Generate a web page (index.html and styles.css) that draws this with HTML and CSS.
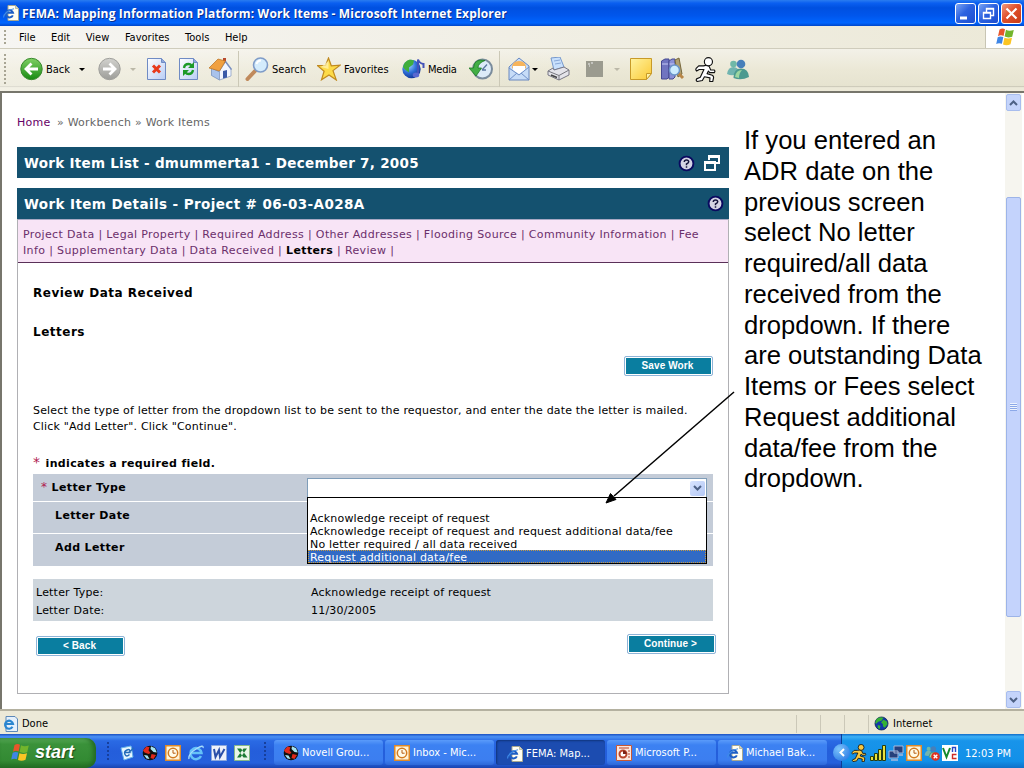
FILE: index.html
```html
<!DOCTYPE html>
<html lang="en">
<head>
    <meta charset="UTF-8">
    <meta name="viewport" content="width=device-width, initial-scale=1.0">
    <title>FEMA: Mapping Information Platform: Work Items</title>
    <link rel="stylesheet" href="styles.css">
</head>
<body>
    <!-- shared icons -->
    <svg class="defs" width="0" height="0">
        <defs>
            <linearGradient id="g-green" x1="0" y1="0" x2="0" y2="1"><stop offset="0" stop-color="#7fd064"/><stop offset="1" stop-color="#188a12"/></linearGradient>
            <linearGradient id="g-gray" x1="0" y1="0" x2="0" y2="1"><stop offset="0" stop-color="#d2d2ce"/><stop offset="1" stop-color="#9d9d99"/></linearGradient>
            <linearGradient id="g-page" x1="0" y1="0" x2="1" y2="1"><stop offset="0" stop-color="#fff"/><stop offset="1" stop-color="#b9cdf5"/></linearGradient>
            <linearGradient id="g-note" x1="0" y1="0" x2="1" y2="1"><stop offset="0" stop-color="#fff3a0"/><stop offset="1" stop-color="#fbc935"/></linearGradient>
            <radialGradient id="g-globe" cx=".35" cy=".3" r=".8"><stop offset="0" stop-color="#9fd4ff"/><stop offset=".5" stop-color="#2f6fd8"/><stop offset="1" stop-color="#0a2a8a"/></radialGradient>
        </defs>
        <symbol id="ie-doc" viewBox="0 0 16 16">
            <path d="M5 .5h7.500L15.500 3.500v12H5z" fill="#fffef2" stroke="#a8a890"/>
            <path d="M12.500 .5v3h3" fill="#d8d8c4" stroke="#a8a890" stroke-width=".7"/>
            <path d="M9.800 10.300A3.600 3.600 0 1 1 10 7.800H3.500" fill="none" stroke="#1e5fc4" stroke-width="2"/>
            <path d="M.8 12.500C0 10 5 4.500 11 3.800" fill="none" stroke="#3f8be8" stroke-width="1.100"/>
        </symbol>
        <symbol id="flag" viewBox="0 0 20 18">
            <path d="M4.500 1.500Q7.500-.3 10 1.200L8.600 8Q5.800 6.600 3 8.200z" fill="#e8562a"/>
            <path d="M11 1.800Q14 3.500 18.800 2L17.200 8.700Q13 10.200 9.600 8.600z" fill="#72b52c"/>
            <path d="M2.700 9.300Q5.500 7.700 8.300 9.100L6.900 15.800Q4 14.500 1.200 16z" fill="#3e86e6"/>
            <path d="M9.400 9.700Q13 11.300 17 9.800L15.500 16.300Q11.500 18 8 16.400z" fill="#fbc524"/>
        </symbol>
        <symbol id="clock" viewBox="0 0 16 16">
            <rect width="16" height="16" fill="#e08a28"/><rect x="1.500" y="1.500" width="13" height="13" fill="#fff4d8"/>
            <circle cx="8" cy="8" r="4.700" fill="#fffbe8" stroke="#d27a20" stroke-width="1.500"/>
            <path d="M8 5v3.200h2.600" fill="none" stroke="#b45a10"/>
        </symbol>
        <symbol id="novell" viewBox="0 0 16 16">
            <circle cx="8" cy="8" r="7.300" fill="#111"/>
            <path d="M1 5.500L4.500 1.500l3 .8-1 3 2 2.700-2 1-4-1.500zM9.500 9l4.500 1-2.500 4-3-1z" fill="#e0281c"/>
            <path d="M9 1.200l4 2 1.800 4.300-3.300-.5-3-3zM2 10l3.500 .5 2 3.500-3-.5z" fill="#a4e4f4"/>
        </symbol>
        <symbol id="globe" viewBox="0 0 16 16">
            <circle cx="8" cy="8" r="7" fill="#1238a8" stroke="#061a48" stroke-width=".7"/>
            <path d="M3 3Q7 0 10 2L8 5 4.500 6 2 8.500 1.300 7zM10 4l3.500 1.500 1 3-3 4-2-1.500V8.500L7.500 7zM4 9.500l3 1-1 3.500-2-1.500z" fill="#35b135"/>
        </symbol>
        <symbol id="people" viewBox="0 0 24 22">
            <circle cx="7.500" cy="6" r="3.300" fill="#6fb8a8"/><path d="M1 16q1-7 6.500-7 5 0 5.500 6-6 4-12 1z" fill="#70b4b0"/>
            <circle cx="15" cy="6" r="4.300" fill="#477fba"/><path d="M7.500 20q0-9.500 7.500-9.500T23 19q-8 4-15.500 1z" fill="#4c9a90"/>
            <path d="M9 19q1-7 7-7-3 3-3 8z" fill="#9cd6a0"/>
        </symbol>
        <symbol id="runner" viewBox="0 0 20 24">
            <path d="M8 8.500Q11 7.500 13.500 9L15 12.500h3.500q1 1.300 0 2.500H14l-1.200-1.500L11.500 16l5 1.500q1.500 .8 1.200 2.500l-.7 3.500h-3l.3-3.500-5.300-1L7 22.500 2 23.500Q.5 22.500 1.500 21l3.500-1.500 3.500-7.500H4L1.500 13.500Q.2 12.500 1 11l2.500-2.500z" fill="currentColor" stroke="#111" stroke-width="1.100" stroke-linejoin="round"/>
            <circle cx="12.800" cy="4.500" r="3.900" fill="currentColor" stroke="#111" stroke-width="1.100"/>
        </symbol>
        <symbol id="help" viewBox="0 0 16 16">
            <circle cx="8" cy="8" r="6.500" fill="#d4d4e4" stroke="#0a0a60" stroke-width="1.800"/>
            <path d="M5.900 6.600Q6 4.600 8 4.600T10.100 6.400Q10.100 7.500 8 8.500v1.100M8 10.500v1.500" fill="none" stroke="#15153c" stroke-width="1.400"/>
        </symbol>
    </svg>

    <div class="titlebar">
        <svg class="title-icon" width="16" height="16"><use href="#ie-doc"/></svg>
        <span class="title-text">FEMA: Mapping Information Platform: Work Items - Microsoft Internet Explorer</span>
        <div class="window-buttons">
            <span class="win-btn"><svg width="19" height="19"><path d="M4 14h7" stroke="#fff" stroke-width="3"/></svg></span>
            <span class="win-btn"><svg width="19" height="19"><path d="M7.500 8V4.500h7v7H12M7 5h8M4.500 8.500h7v6h-7zM4 9h8" fill="none" stroke="#fff" stroke-width="1.400"/></svg></span>
            <span class="win-btn close"><svg width="19" height="19"><path d="M4.500 4.500l10 10M14.500 4.500l-10 10" stroke="#fff" stroke-width="2.200"/></svg></span>
        </div>
    </div>

    <div class="menubar">
        <span class="grip"></span>
        <div class="menu-items">
            <span>File</span><span>Edit</span><span>View</span><span>Favorites</span><span>Tools</span><span>Help</span>
        </div>
        <div class="throbber"><svg width="20" height="18"><use href="#flag"/></svg></div>
    </div>

    <div class="toolbar">
        <span class="grip tall"></span>
        <span class="tool">
            <svg width="23" height="24" viewBox="0 0 23 24"><circle cx="11.500" cy="12" r="10.700" fill="url(#g-green)" stroke="#3b8a30"/><path d="M18 12H6M11.500 6.500L6 12l5.500 5.500" fill="none" stroke="#fff" stroke-width="2.800"/></svg>
            <span class="label">Back</span><i class="caret"></i>
        </span>
        <span class="tool">
            <svg width="23" height="24" viewBox="0 0 23 24"><circle cx="11.500" cy="12" r="10.700" fill="url(#g-gray)" stroke="#a0a09c"/><path d="M5 12h12M11.500 6.500L17 12l-5.500 5.500" fill="none" stroke="#fff" stroke-width="2.800"/></svg>
            <i class="caret off"></i>
        </span>
        <span class="tool"><svg width="19" height="24" viewBox="0 0 19 24"><path d="M.5 1.500h14l4 4v17H.5z" fill="url(#g-page)" stroke="#6f8bc4"/><path d="M14.500 1.500v4h4" fill="#8fa8dc" stroke="#6f8bc4"/><path d="M6 8.500l7 7M13 8.500l-7 7" stroke="#e83a1c" stroke-width="3"/></svg></span>
        <span class="tool"><svg width="19" height="24" viewBox="0 0 19 24"><path d="M.5 1.500h14l4 4v17H.5z" fill="url(#g-page)" stroke="#6f8bc4"/><path d="M14.500 1.500v4h4" fill="#8fa8dc" stroke="#6f8bc4"/><path d="M5 11q.5-4 4.500-4 2 0 3 1.500M14 13q-.5 4-4.500 4-2 0-3-1.500" fill="none" stroke="#1c9a28" stroke-width="2.300"/><path d="M15 5v6H9zM4 19v-6h6z" fill="#1c9a28"/></svg></span>
        <span class="tool"><svg width="23" height="24" viewBox="0 0 23 24"><path d="M14 1h3v5h-3z" fill="#b84a2c"/><path d="M2.500 11l8 4v8l-8-4.500z" fill="#a9c3ec" stroke="#6c88b8" stroke-width=".7"/><path d="M10.500 14l6-9 5.500 7v7l-11.500 4z" fill="#f2f6ff" stroke="#7f96c0" stroke-width=".7"/><path d="M0 11L9 2l7.500 2L10.500 14z" fill="#f0a040" stroke="#b87022" stroke-width=".7"/><path d="M16.500 4.500L22.500 12.500" stroke="#7a90c0" stroke-width="1.500"/><path d="M14 14l4-1v7.500l-4 1z" fill="#3a5aa8"/></svg></span>
        <span class="divider"></span>
        <span class="tool">
            <svg width="24" height="24" viewBox="0 0 24 24"><path d="M10 14L2.500 22" stroke="#c08a5c" stroke-width="4" stroke-linecap="round"/><circle cx="15.500" cy="8" r="7" fill="#d4ecfc" stroke="#7f9cc8" stroke-width="1.600"/><path d="M11.500 7q1-3.500 4.500-3.500" fill="none" stroke="#fff" stroke-width="2"/></svg>
            <span class="label">Search</span>
        </span>
        <span class="tool">
            <svg width="24" height="24" viewBox="0 0 24 24"><path d="M11.500 1l2.800 7.800 8.700-.6-7 5.400 3.300 9.400-7.300-5-7.500 4.800 2.600-8.600L.5 8.600l8-.2z" fill="#fddb48" stroke="#c08a20" stroke-width="1.200"/><path d="M11.500 4v8L4 10z" fill="#fff5b8" opacity=".7"/></svg>
            <span class="label">Favorites</span>
        </span>
        <span class="tool media">
            <svg width="24" height="24" viewBox="0 0 24 24"><circle cx="9.500" cy="12" r="9.200" fill="url(#g-globe)"/><path d="M1 10q1-6 7-7.500l4 1-1 4-4 3v5l-4-3z" fill="#3fae3c"/><path d="M16 18V2.500q1.500 4 5.500 4.500v4" fill="none" stroke="#4452b8" stroke-width="2"/><ellipse cx="14" cy="18" rx="3.300" ry="2.500" fill="#5868d0"/></svg>
            <span class="label">Media</span>
        </span>
        <span class="tool"><svg width="24" height="24" viewBox="0 0 24 24"><circle cx="13.500" cy="12" r="9.500" fill="#dcebf8" stroke="#7a8c9c" stroke-width="2"/><path d="M13 13l5-5.500M13 13h4" stroke="#5a78a0" stroke-width="1.300"/><path d="M16 3.500Q5 1 4.500 11H0l7 8 5.500-8H9q0-5 7-7.500z" fill="#43ae45" stroke="#1d7b26" stroke-width=".8"/></svg></span>
        <span class="divider"></span>
        <span class="tool">
            <svg width="22" height="24" viewBox="0 0 22 24"><path d="M1 10L11 1l10 8v14H1z" fill="#c6dcf8" stroke="#6888c0"/><path d="M4 11q0-7 7-7t7 7l-7 4z" fill="#f6b45c"/><path d="M5 9h12v4l-6 4-6-4z" fill="#fff"/><path d="M1 11l10 7 10-8M1 23l8-7M21 23l-8-7" fill="none" stroke="#6f90c8"/></svg>
            <i class="caret near"></i>
        </span>
        <span class="tool"><svg width="24" height="24" viewBox="0 0 24 24"><path d="M4 1l9-1 4 10-10 3z" fill="#c8e0fc" stroke="#7698cc"/><path d="M7 4l6-1M8 7l6-1" stroke="#88a8d8"/><path d="M1 14l5-3 1 2 10-3 5 3v5l-10 5-11-5z" fill="#e4e4ea" stroke="#777784"/><path d="M1 14l11 4.500 10-5.500M12 18.500V23" fill="none" stroke="#77777f"/><path d="M4 18l6 2.500" stroke="#444" stroke-width="1.500"/></svg></span>
        <span class="tool"><svg width="17" height="18" viewBox="0 0 17 18"><path d="M0 1h17v16H0z" fill="#9b9b8f"/><path d="M2 4h2M5 3h2M3 6h1" stroke="#eee"/></svg><i class="caret off edit-caret"></i></span>
        <span class="tool"><svg width="22" height="24" viewBox="0 0 22 24"><path d="M.5 1.500h21v15l-5 6H.5z" fill="url(#g-note)" stroke="#c89a28"/><path d="M21.500 16.500h-5v6z" fill="#fff2a4" stroke="#c89a28"/></svg></span>
        <span class="tool"><svg width="24" height="24" viewBox="0 0 24 24"><path d="M.5 4L4 2h4v18l-2 2H.5z" fill="#7074c0" stroke="#454890"/><path d="M8 4l3-2h3v18l-2 2H8z" fill="#8a90d8" stroke="#454890"/><path d="M1 7h6M8.500 7h5" stroke="#c4c8f4"/><path d="M14 3l4-2 3 16-4 3z" fill="#b0a070" stroke="#77683c"/><path d="M17 16l5 5" stroke="#b98748" stroke-width="3"/><circle cx="13.500" cy="13" r="5" fill="#ccecff" stroke="#6a94c8" stroke-width="1.500"/></svg></span>
        <span class="tool aim"><svg width="21" height="25"><use href="#runner"/></svg></span>
        <span class="tool"><svg width="24" height="22"><use href="#people"/></svg></span>
    </div>

    <div class="viewport">
        <div class="page">
            <div class="main">
                <div class="breadcrumb"><a class="home">Home</a><span>» Workbench » Work Items</span></div>

                <div class="section-bar">
                    <span class="list-title">Work Item List - dmummerta1 - December 7, 2005</span>
                    <svg class="help" width="17" height="17"><use href="#help"/></svg>
                    <svg width="16" height="16"><path d="M5 5V1h10v7h-4M5 2h10M1 7h10v8H1zM1 8h10" fill="none" stroke="#fff" stroke-width="2"/></svg>
                </div>

                <div class="section-bar details-bar">
                    <span class="details-title">Work Item Details - Project # 06-03-A028A</span>
                    <svg width="17" height="17"><use href="#help"/></svg>
                </div>
                <div class="panel">
                    <div class="tabs">
                        <div>Project Data | Legal Property | Required Address | Other Addresses | Flooding Source | Community Information | Fee</div>
                        <div class="tabs-second">Info | Supplementary Data | Data Received | <b>Letters</b> | Review |</div>
                    </div>

                    <div class="panel-body">
                        <h2>Review Data Received</h2>
                        <h2 class="sub">Letters</h2>
                        <div class="save-row"><span class="btn">Save Work</span></div>
                        <div class="instructions">
                            <div>Select the type of letter from the dropdown list to be sent to the requestor, and enter the date the letter is mailed.</div>
                            <div class="click-line">Click "Add Letter". Click "Continue".</div>
                        </div>
                        <div class="required-note"><span class="star big">*</span> indicates a required field.</div>

                        <div class="form">
                            <div class="form-row">
                                <span class="form-label"><span class="star">*</span> Letter Type</span>
                                <div class="select">
                                    <span class="select-arrow"><svg width="9" height="6"><path d="M1 1l3.500 3.500L8 1" fill="none" stroke="#4d6185" stroke-width="2"/></svg></span>
                                    <div class="options">
                                        <div></div>
                                        <div>Acknowledge receipt of request</div>
                                        <div>Acknowledge receipt of request and request additional data/fee</div>
                                        <div>No letter required / all data received</div>
                                        <div class="selected">Request additional data/fee</div>
                                    </div>
                                </div>
                            </div>
                            <div class="form-row"><span class="form-label indent">Letter Date</span></div>
                            <div class="form-row"><span class="form-label indent">Add Letter</span></div>
                        </div>

                        <div class="summary">
                            <span>Letter Type:</span><span>Acknowledge receipt of request</span>
                            <span>Letter Date:</span><span>11/30/2005</span>
                        </div>

                        <div class="nav-row"><span class="btn back">&lt; Back</span><span class="btn">Continue &gt;</span></div>
                    </div>
                </div>
            </div>

            <div class="note">
                If you entered an<br>ADR date on the<br>previous screen<br>select No letter<br>required/all data<br>received from the<br>dropdown. If there<br>are outstanding Data<br>Items or Fees select<br>Request additional<br>data/fee from the<br>dropdown.
            </div>
        </div>

        <div class="scrollbar">
            <span class="scroll-btn"><svg width="9" height="6"><path d="M1 5l3.500-3.500L8 5" fill="none" stroke="#4d6185" stroke-width="2"/></svg></span>
            <span class="thumb"><i></i></span>
            <span class="scroll-btn"><svg width="9" height="6"><path d="M1 1l3.500 3.500L8 1" fill="none" stroke="#4d6185" stroke-width="2"/></svg></span>
        </div>
    </div>

    <div class="statusbar">
        <svg width="15" height="16" viewBox="0 0 15 16"><path d="M3 .5h9l2.500 2.500v12.500H3z" fill="#e4f0fc" stroke="#5c88b8"/><path d="M9.500 10.800A4 4 0 1 1 10 8H2.500" fill="none" stroke="#2a86d0" stroke-width="2.200"/></svg>
        <span class="done">Done</span>
        <span class="status-cell"></span><span class="status-cell"></span><span class="status-cell"></span>
        <span class="status-cell zone"><svg width="15" height="15"><use href="#globe"/></svg>Internet</span>
    </div>

    <div class="taskbar">
        <div class="start"><svg width="20" height="19"><use href="#flag"/></svg><span>start</span></div>
        <i class="task-grip"></i>
        <div class="quick">
            <svg width="16" height="16" viewBox="0 0 16 16"><path d="M2 3l10-2 2 11-9 3z" fill="#e8f6ff" stroke="#68b4e8"/><path d="M10.500 9.500q-3 3-4.500 0T8 5t3 2.500H6M9 8l6-5" fill="none" stroke="#246cb8" stroke-width="1.500"/></svg>
            <svg width="16" height="16"><use href="#novell"/></svg>
            <svg width="16" height="16"><use href="#clock"/></svg>
            <svg width="16" height="16" viewBox="0 0 16 16"><path d="M13 11A5.500 5.500 0 1 1 13.500 8H4" fill="none" stroke="#65c2f8" stroke-width="2.500"/><path d="M1 14Q0 9 8 4t7-1" fill="none" stroke="#a8defc" stroke-width="1.300"/></svg>
            <svg width="16" height="16" viewBox="0 0 16 16"><path d="M.5 .5h15v15H.5z" fill="#eef2fb" stroke="#8ca8dc"/><path d="M3 4l1.500 8L8 5l1 7 4.500-8" fill="none" stroke="#2a4fa8" stroke-width="2"/></svg>
            <svg width="16" height="16" viewBox="0 0 16 16"><path d="M.5 .5h15v15H.5z" fill="#eaf6e8" stroke="#86b888"/><path d="M3 3.500h4l6.500 9h-4zM13 3.500H9.500L3 12.500h3.500z" fill="#1d7b35"/></svg>
        </div>
        <i class="task-grip second"></i>
        <div class="tasks">
            <span class="task"><svg width="16" height="16"><use href="#novell"/></svg>Novell Grou...</span>
            <span class="task"><svg width="16" height="16"><use href="#clock"/></svg>Inbox - Mic...</span>
            <span class="task active"><svg width="16" height="16"><use href="#ie-doc"/></svg>FEMA: Map...</span>
            <span class="task"><svg width="16" height="16" viewBox="0 0 16 16"><path d="M.5 .5h15v15H.5z" fill="#fbe6dc" stroke="#c85834"/><path d="M3 3h10" stroke="#b8432a"/><circle cx="7" cy="9" r="3.500" fill="#fff" stroke="#b8432a" stroke-width="2"/><path d="M7 9V5.500A3.500 3.500 0 0 1 10.500 9z" fill="#7b2418"/><path d="M12 6h2M12 9h2M12 12h2" stroke="#b8432a"/></svg>Microsoft P...</span>
            <span class="task"><svg width="16" height="16"><use href="#ie-doc"/></svg>Michael Bak...</span>
        </div>
        <div class="tray">
            <span class="chevron"><svg width="8" height="9"><path d="M6 1L2.500 4.500 6 8" fill="none" stroke="#fff" stroke-width="2"/></svg></span>
            <svg class="tray-aim" width="18" height="18"><use href="#runner"/></svg>
            <svg width="16" height="16" viewBox="0 0 16 16"><path d="M.5 11.500h3v4h-3zM4.500 8.500h3v7h-3zM8.500 4.500h3v11h-3zM12.500 .5h3v15h-3z" fill="#e8e03c" stroke="#263c10"/></svg>
            <svg width="16" height="16" viewBox="0 0 16 16"><path d="M6 1h9v7H6zM1 6h9v7H1z" fill="#26407c" stroke="#a8b8dc"/><path d="M3 15h7M11 10h4" stroke="#a8b8dc" stroke-width="1.500"/></svg>
            <svg width="16" height="16"><use href="#clock"/></svg>
            <svg width="16" height="16" viewBox="0 0 16 16"><use href="#people" width="15" height="14"/><circle cx="11.500" cy="11.500" r="4.300" fill="#e03020"/><path d="M9.700 9.700l3.600 3.600M13.300 9.700l-3.600 3.600" stroke="#fff" stroke-width="1.400"/></svg>
            <svg width="16" height="16" viewBox="0 0 16 16"><path d="M0 0h16v16H0z" fill="#fff"/><path d="M1 3l3.500 9L8 3" fill="none" stroke="#168a2c" stroke-width="2"/><path d="M10.500 7V2.500h3V7" fill="none" stroke="#2a48c8" stroke-width="1.400"/><path d="M14.500 9.500h-4v4h4" fill="none" stroke="#d02c24" stroke-width="1.400"/></svg>
            <span class="time">12:03 PM</span>
        </div>
    </div>

    <!-- callout arrow from the note to the dropdown -->
    <svg class="callout-arrow" width="130" height="114" viewBox="0 0 130 114">
        <path d="M129 1L9 105" stroke="#000" stroke-width="1.500"/>
        <path d="M1 112l4.500-9.500 5.500 6z" fill="#000" stroke="#000"/>
    </svg>
</body>
</html>
```

FILE: styles.css
```css
body {
    margin: 0;
    width: 1024px;
    height: 768px;
    overflow: hidden;
    position: relative;
    background: #fff;
    color: #000;
    font-family: "DejaVu Sans", sans-serif;
    font-size: 11px;
}
svg {
    display: block;
    flex: none;
}
.defs {
    position: absolute;
}

/* title bar */
.titlebar {
    height: 26px;
    display: flex;
    align-items: center;
    box-sizing: border-box;
    padding: 0 2px 0 3px;
    background: linear-gradient(#2a7cf0 0, #0a5ff0 12%, #0050e0 30%, #0056ec 60%, #0065ff 88%, #0046c8 100%);
}
.title-text {
    margin-left: 3px;
    color: #fff;
    font: bold 12px "Open Sans", sans-serif;
    letter-spacing: .16px;
    text-shadow: 1px 1px 0 #0a2f8c;
    white-space: nowrap;
}
.window-buttons {
    margin-left: auto;
    display: flex;
    gap: 2px;
}
.win-btn {
    width: 19px;
    height: 19px;
    border: 1px solid #fff;
    border-radius: 3px;
    background: linear-gradient(135deg, #7aa4f4, #2c62e0 45%, #1d4ed0);
}
.win-btn.close {
    background: linear-gradient(135deg, #f09a80, #e0502c 45%, #c83c18);
}

/* menu and tool bars */
.menubar {
    height: 22px;
    display: flex;
    align-items: center;
    background: linear-gradient(90deg, #f6f5f2, #ece9d8);
    border-bottom: 1px solid #cfccbc;
    font-family: "DejaVu Sans Condensed", sans-serif;
}
.grip {
    width: 2px;
    height: 14px;
    margin-left: 4px;
    background: repeating-linear-gradient(#a8a594 0 2px, transparent 2px 4px);
}
.menu-items {
    display: flex;
    gap: 15.600px;
    margin-left: 13px;
}
.throbber {
    margin-left: auto;
    width: 38px;
    height: 22px;
    display: flex;
    align-items: center;
    justify-content: center;
    background: #fff;
    border-left: 1px solid #c8c5b4;
}
.toolbar {
    height: 42px;
    display: grid;
    grid-template-columns: 20px 78px 49px 32px 30px 29px 7px 72px 85px 67px 30px 9px 39px 39px 44px 31px 34px 31px 40px;
    align-items: center;
    box-sizing: border-box;
    padding-bottom: 2px;
    background: linear-gradient(90deg, rgba(255, 255, 255, .35), rgba(255, 255, 255, 0) 60%), linear-gradient(#f3f1e8, #ebe8d6 50%, #e6e3d0 88%, #cbc8b8 89%, #ece9d8 92%);
    font-family: "DejaVu Sans Condensed", sans-serif;
}
.grip.tall {
    height: 30px;
}
.tool {
    display: flex;
    align-items: center;
}
.label {
    margin-left: 3px;
}
.media .label {
    margin-left: 2px;
    letter-spacing: -.2px;
}
.divider {
    width: 1px;
    height: 36px;
    background: #cbc8b6;
}
.caret {
    margin-left: 9px;
    border: 3px solid transparent;
    border-top-color: #000;
    border-bottom: 0;
}
.caret.off {
    border-top-color: #bbb8a8;
}
.caret.near {
    margin-left: 2px;
}
.edit-caret {
    margin-left: 11px;
}
.aim {
    color: #fff;
}
.tray-aim {
    color: #f8c840;
}

/* browser viewport */
.viewport {
    height: 618px;
    display: flex;
    box-sizing: border-box;
    border-top: 2px solid #77766c;
    border-left: 2px solid #77766c;
    background: #fff;
}
.page {
    flex: 1;
    display: flex;
}
.main {
    width: 712px;
    margin-left: 15px;
}
.breadcrumb {
    height: 54px;
    display: flex;
    box-sizing: border-box;
    padding-top: 23px;
    color: #666;
    line-height: 14px;
    letter-spacing: .22px;
}
.home {
    width: 40px;
    color: #606;
}
.section-bar {
    height: 31px;
    display: flex;
    align-items: center;
    box-sizing: border-box;
    padding: 1px 9px 0 7px;
    background: #14516f;
    color: #fff;
    font-size: 13.500px;
    font-weight: bold;
}
.section-bar span {
    flex: 1;
    white-space: nowrap;
}
.list-title {
    letter-spacing: .28px;
}
.details-title {
    letter-spacing: .4px;
}
.section-bar .help {
    margin-right: 9px;
}
.details-bar {
    margin-top: 10px;
    padding: 0 5px 0 7px;
}
.panel {
    height: 475px;
    box-sizing: border-box;
    border: 1px solid #b0b0b4;
    border-top: 0;
}
.tabs {
    height: 44px;
    box-sizing: border-box;
    padding: 7px 0 0 5px;
    background: #f8e4f6;
    border-top: 1px solid #a8a8c4;
    border-bottom: 1px solid #5a3058;
    color: #6b2f6b;
    line-height: 16px;
    letter-spacing: .345px;
    white-space: nowrap;
}
.tabs-second {
    letter-spacing: .37px;
}
.tabs b {
    color: #000;
}
.panel-body {
    padding: 0 15px;
}
h2 {
    margin: 0;
    padding-top: 22px;
    font-size: 12px;
    line-height: 16px;
    letter-spacing: .5px;
}
h2.sub {
    padding-top: 23px;
}
.save-row {
    display: flex;
    justify-content: flex-end;
    margin-top: 17px;
}
.btn {
    width: 87px;
    height: 18px;
    box-sizing: border-box;
    border: 1px solid #fff;
    outline: 1px solid #8fb4d8;
    border-radius: 1px;
    margin-right: 1px;
    padding-right: 2px;
    background: #0a7ea0;
    color: #fff;
    font: bold 10px/16px "Liberation Sans", sans-serif;
    letter-spacing: .1px;
    text-align: center;
}
.instructions {
    margin-top: 28px;
    line-height: 16px;
    letter-spacing: .185px;
    white-space: nowrap;
}
.required-note {
    height: 16px;
    margin-top: 20px;
    line-height: 16px;
    font-weight: bold;
    letter-spacing: .35px;
}
.star {
    color: #b02050;
    font-weight: normal;
}
.star.big {
    margin-right: 1px;
    font-size: 14px;
    line-height: 14px;
}
.form {
    width: 680px;
    margin-top: 3px;
    display: grid;
    grid-template-rows: 27px 31px 32px;
    gap: 1px;
}
.form-row {
    display: flex;
    background: #c4ccd8;
}
.form-label {
    width: 266px;
    padding: 7px 0 0 8px;
    font-weight: bold;
    font-size: 11px;
    line-height: 14px;
    letter-spacing: .38px;
}
.form-label .star {
    font-size: 12px;
    line-height: 12px;
}
.form-label.indent {
    padding-left: 22px;
}
.select {
    position: relative;
    width: 400px;
    height: 20px;
    margin-top: 4px;
    display: flex;
    align-items: center;
    justify-content: flex-end;
    box-sizing: border-box;
    background: #fff;
    border: 1px solid #7f9db9;
}
.select-arrow {
    width: 15px;
    height: 15px;
    margin-right: 1px;
    display: flex;
    align-items: center;
    justify-content: center;
    border-radius: 2px;
    background: linear-gradient(135deg, #d8e4fe, #b4c8f6);
}
.options {
    position: absolute;
    z-index: 1;
    left: -1px;
    top: 18px;
    width: 400px;
    height: 67px;
    box-sizing: border-box;
    border: 1px solid #000;
    background: #fff;
    line-height: 15px;
    letter-spacing: .19px;
    white-space: nowrap;
}
.options div {
    height: 13px;
    padding-left: 2px;
}
.options .selected {
    background: #316ac5;
    color: #fff;
    outline: 1px dotted #c89a40;
    outline-offset: -1px;
}
.summary {
    width: 680px;
    height: 42px;
    margin-top: 13px;
    display: grid;
    grid-template-columns: 275px 1fr;
    grid-auto-rows: 18px;
    box-sizing: border-box;
    padding: 6px 0 0 3px;
    background: #cdd5dc;
    line-height: 16px;
    letter-spacing: .2px;
}
.nav-row {
    display: flex;
    justify-content: space-between;
    margin: 14px -3px 0 4px;
}
.nav-row .back {
    margin-top: 2px;
}
.note {
    margin: 32px 0 0 15px;
    font: 25.600px/30.750px "Liberation Sans", sans-serif;
    white-space: nowrap;
}
.callout-arrow {
    position: absolute;
    left: 605px;
    top: 391px;
    z-index: 2;
}

/* scrollbar */
.scrollbar {
    width: 17px;
    height: 616px;
    margin-right: 2px;
    display: flex;
    flex-direction: column;
    align-items: center;
    background: #f6f5ef;
}
.scroll-btn {
    width: 13px;
    height: 15px;
    margin: 1px 0;
    display: flex;
    align-items: center;
    justify-content: center;
    border-radius: 2px;
    background: #c4d4fb;
    border: 1px solid #a8bdee;
    flex: none;
}
.thumb {
    width: 13px;
    height: 418px;
    margin: 85px 0 auto;
    display: flex;
    align-items: center;
    justify-content: center;
    background: #c4d3fc;
    border: 1px solid #9db4e8;
    border-radius: 2px;
}
.thumb i {
    width: 7px;
    height: 8px;
    background: repeating-linear-gradient(#eef4fe 0 1px, #8ca8e8 1px 2px);
}

/* status bar */
.statusbar {
    height: 25px;
    display: flex;
    align-items: center;
    box-sizing: border-box;
    padding: 2px 0 0 3px;
    background: #ece9d8;
    border-top: 2px solid #b4b1a0;
    font-family: "DejaVu Sans Condensed", sans-serif;
}
.done {
    margin-left: 4px;
    flex: 1;
}
.status-cell {
    width: 23px;
    height: 18px;
    border-left: 1px solid #cbc8b8;
}
.zone {
    width: 150px;
    display: flex;
    align-items: center;
    gap: 4px;
    padding-left: 5px;
}

/* task bar */
.taskbar {
    height: 34px;
    display: flex;
    align-items: center;
    background: linear-gradient(#1a50c0 0, #4a90f4 8%, #2a6ae4 20%, #245edb 50%, #2560dc 85%, #1a44b0 100%);
    color: #fff;
    font-family: "DejaVu Sans Condensed", sans-serif;
}
.start {
    width: 96px;
    height: 30px;
    margin-top: 4px;
    display: flex;
    align-items: center;
    box-sizing: border-box;
    padding: 0 0 1px 10px;
    gap: 5px;
    border-radius: 0 10px 10px 0;
    background: linear-gradient(#5cae5c, #3a923a 20%, #338a33 75%, #236e23);
    box-shadow: inset -3px 0 4px #246a24;
    font: italic bold 18px "Liberation Sans", sans-serif;
    text-shadow: 1px 1px 1px #1a4a1a;
}
.task-grip {
    width: 4px;
    height: 20px;
    margin-left: 10px;
    background: radial-gradient(circle, #173f9c 1px, transparent 1.500px) 0 0 / 4px 4px;
}
.task-grip.second {
    margin-left: 13px;
}
.quick {
    display: flex;
    gap: 7px;
    margin: 3px 0 0 9px;
}
.tasks {
    display: flex;
    gap: 2px;
    margin: 3px 0 0 7px;
}
.task {
    width: 109px;
    height: 25px;
    display: flex;
    align-items: center;
    gap: 3px;
    box-sizing: border-box;
    padding-left: 9px;
    border-radius: 3px;
    background: linear-gradient(#5a9bfa, #3c81f2 20%, #3c7ef0 80%, #2e68d8);
    white-space: nowrap;
}
.task.active {
    padding: 2px 0 0 11px;
    background: #1c4cb0;
    box-shadow: inset 1px 1px 2px #10347c;
}
.tray {
    position: relative;
    height: 34px;
    margin-left: auto;
    width: 183px;
    display: flex;
    align-items: center;
    gap: 2px;
    box-sizing: border-box;
    padding: 4px 0 0 8px;
    background: linear-gradient(#0f6cc8 0, #3cb0f6 8%, #1894ea 20%, #1290e8 80%, #0f70c8);
    border-left: 1px solid #0e3c94;
}
.chevron {
    position: absolute;
    left: -9px;
    top: 10px;
    width: 17px;
    height: 17px;
    display: flex;
    align-items: center;
    justify-content: center;
    border-radius: 50%;
    background: radial-gradient(circle at 35% 30%, #7cc4fc, #1c6ce0);
}
.time {
    margin-left: 5px;
}
```
